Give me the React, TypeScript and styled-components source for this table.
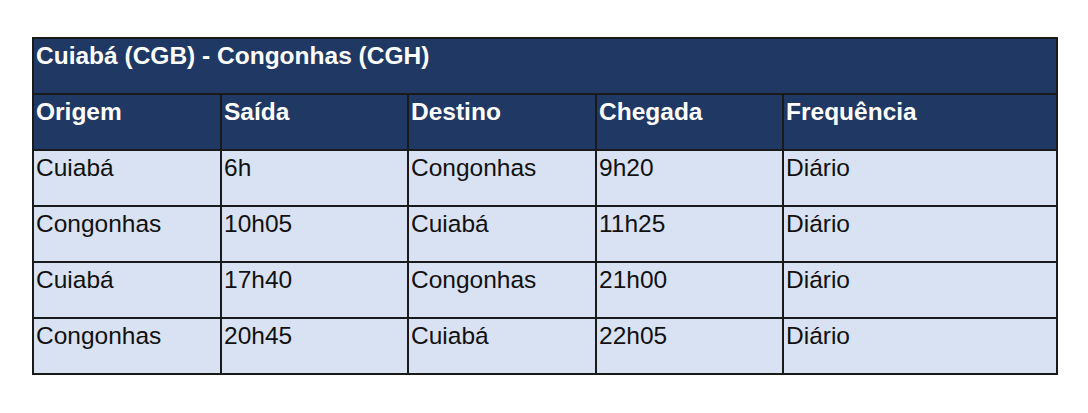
import React from "react";
import styled, { createGlobalStyle } from "styled-components";

const Global = createGlobalStyle`
  html, body { margin: 0; padding: 0; background: #fff; }
  body { font-family: "Liberation Sans", Arial, sans-serif; }
`;

const Page = styled.div`
  padding: 37px 0 0 32px;
`;

const Table = styled.table`
  border-collapse: collapse;
  table-layout: fixed;
  width: 1024px;
  font-family: "Liberation Sans", Arial, sans-serif;
  font-size: 24.5px;
`;

const Col = styled.col<{ $w: number }>`
  width: ${(p) => p.$w}px;
`;

const Row = styled.tr`
  height: 56px;
`;

const Cell = styled.td<{ $head?: boolean }>`
  border: 2px solid #1a1a1a;
  padding: 3px 2px 0 2px;
  vertical-align: top;
  text-align: left;
  line-height: 28px;
  color: ${(p) => (p.$head ? "#ffffff" : "#111111")};
  background: ${(p) => (p.$head ? "#1f3864" : "#d9e2f3")};
  font-weight: ${(p) => (p.$head ? 700 : 400)};
  white-space: nowrap;
  overflow: hidden;
`;

const widths = [188, 187, 188, 187, 274];
const headers = ["Origem", "Saída", "Destino", "Chegada", "Frequência"];
const rows = [
  ["Cuiabá", "6h", "Congonhas", "9h20", "Diário"],
  ["Congonhas", "10h05", "Cuiabá", "11h25", "Diário"],
  ["Cuiabá", "17h40", "Congonhas", "21h00", "Diário"],
  ["Congonhas", "20h45", "Cuiabá", "22h05", "Diário"],
];

export default function App() {
  return (
    <Page>
      <Global />
      <Table>
        <colgroup>
          {widths.map((w, i) => (
            <Col key={i} $w={w} />
          ))}
        </colgroup>
        <tbody>
          <Row>
            <Cell $head colSpan={5}>Cuiabá (CGB) - Congonhas (CGH)</Cell>
          </Row>
          <Row>
            {headers.map((h) => (
              <Cell $head key={h}>{h}</Cell>
            ))}
          </Row>
          {rows.map((r, i) => (
            <Row key={i}>
              {r.map((c, j) => (
                <Cell key={j}>{c}</Cell>
              ))}
            </Row>
          ))}
        </tbody>
      </Table>
    </Page>
  );
}
